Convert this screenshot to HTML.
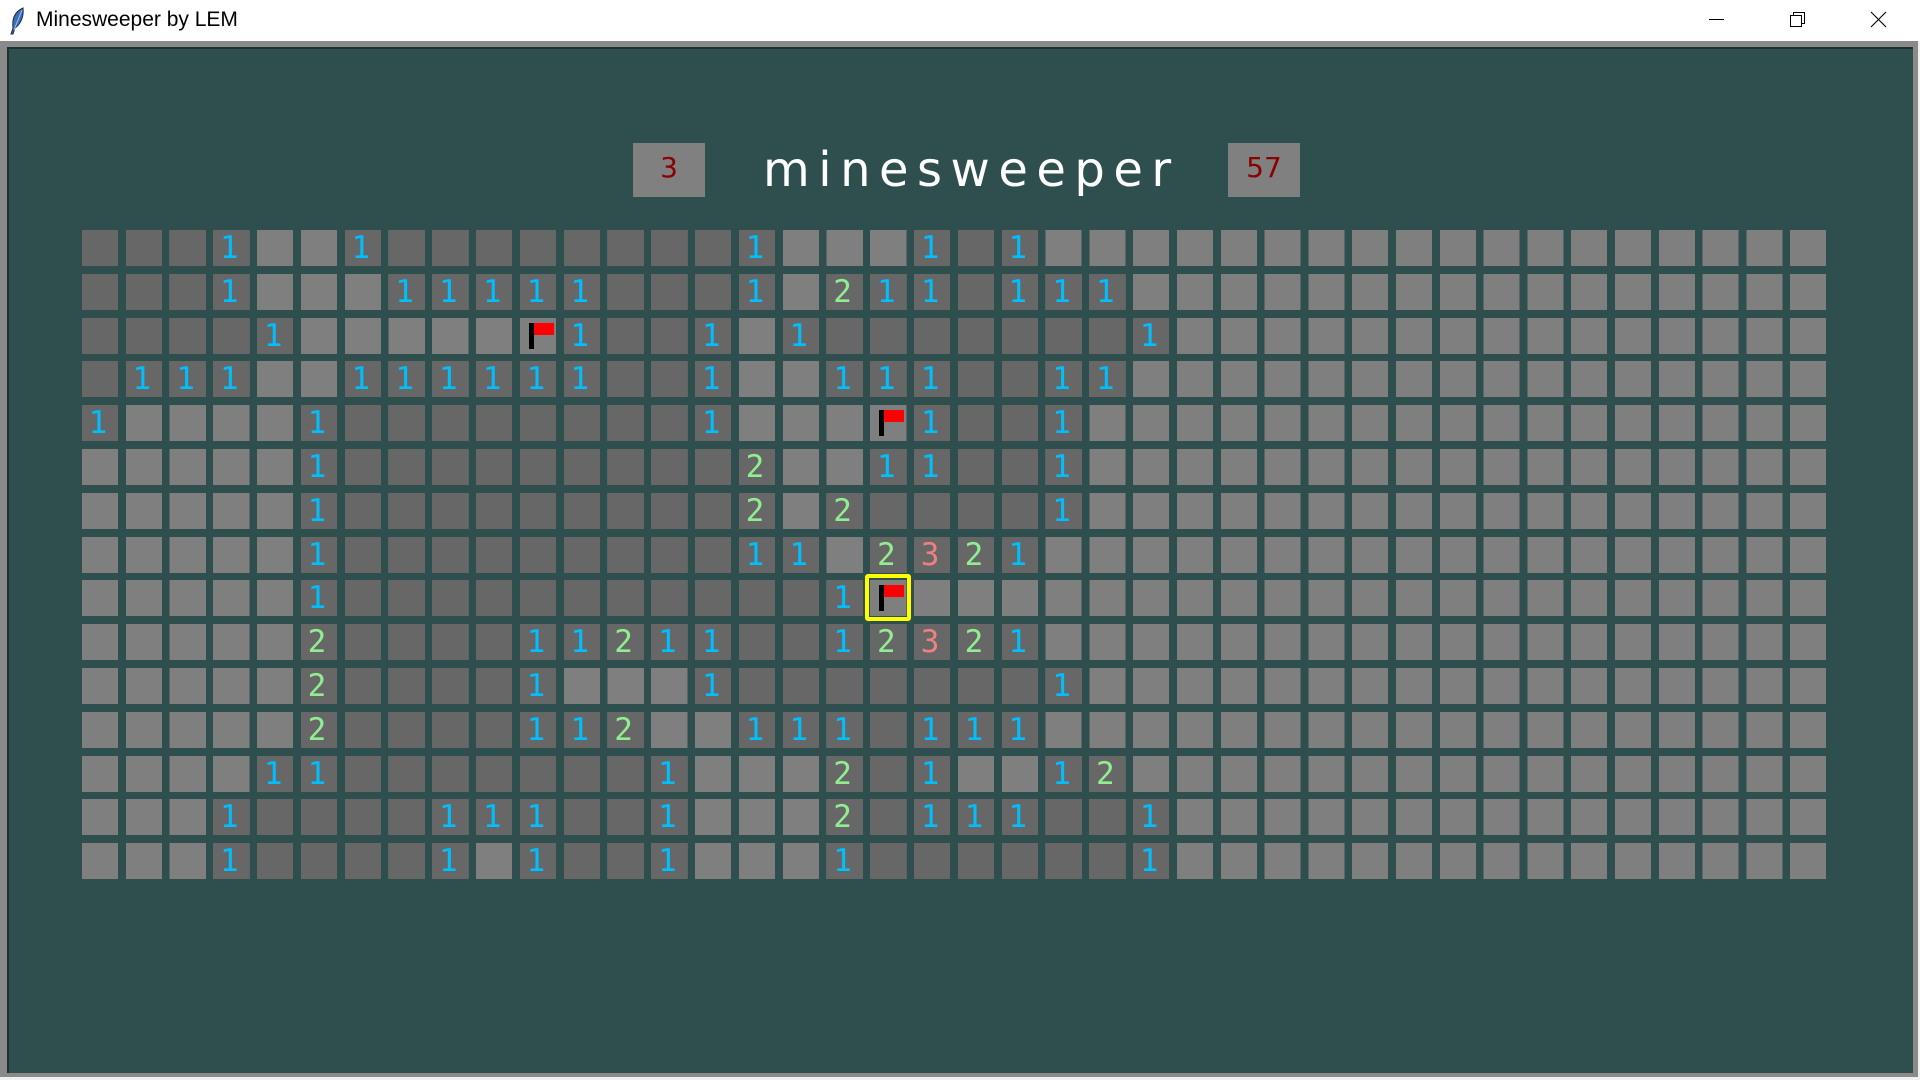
<!DOCTYPE html>
<html><head><meta charset="utf-8"><style>
html,body{margin:0;padding:0;width:1920px;height:1080px;overflow:hidden;background:#f0f0f0;font-family:"Liberation Sans",sans-serif}
#tb{position:absolute;left:0;top:0;width:1920px;height:41px;background:#fff}
#tt{position:absolute;left:36px;top:8px;font-size:21px;color:#000}
#frame{position:absolute;left:0;top:41px;width:1918px;height:1036px;background:#8a8a8a}
#app{position:absolute;left:7px;top:47px;width:1906px;height:1026px;background:#2f4f4f;border-top:2px solid #1d2f2f;border-left:2px solid #1d2f2f;box-sizing:border-box}
.cnt{position:absolute;top:143px;width:72px;height:54px;background:#808080;color:#8b0000;font-family:"DejaVu Sans",sans-serif;font-size:28px;line-height:50px;text-align:center}
#title{position:absolute;left:763px;top:140px;font-family:"DejaVu Sans",sans-serif;font-size:48px;letter-spacing:8.5px;color:#fff;line-height:60px}
#g{position:absolute;left:82px;top:230px;width:1744px}
.row{display:flex;column-gap:7.8px;height:36px;margin-bottom:7.8px;background:repeating-linear-gradient(90deg,#7f7f7f 0 36px,transparent 36px 43.8px)}
.row b,.row i{display:block;flex:none;width:36px;height:36px;position:relative;font-family:"DejaVu Sans Mono",monospace;font-weight:normal;font-style:normal;font-size:31px;line-height:37px;text-align:center;text-indent:-4px}
.row b{background:#676767}
.row i{background:#7f7f7f}
.a{color:#00bfff}.g{color:#90ee90}.r{color:#f08080}
.row i.f::before{content:"";position:absolute;left:9px;top:5px;width:5px;height:26px;background:#000}
.row i.f::after{content:"";position:absolute;left:14px;top:5px;width:20px;height:12px;background:#f00}
#hl{position:absolute;width:46px;height:47px;border:4px solid #ffff00;border-radius:3px;box-sizing:border-box;left:-5px;top:-6px}
</style></head><body>
<div id="tb">
<svg style="position:absolute;left:8px;top:6px" width="18" height="30" viewBox="0 0 18 30"><path d="M15 2 C6 6 4 14 5 22 L3 28 L5 28 L7 22 C13 18 16 10 15 2Z" fill="#3a6fb5" stroke="#1b2d4a" stroke-width="1"/><path d="M14 4 L6 24" stroke="#9cc2ee" stroke-width="1"/></svg>
<div id="tt">Minesweeper by LEM</div>
<svg style="position:absolute;left:1700px;top:0" width="220" height="40" viewBox="1700 0 220 40">
<line x1="1709" y1="19.5" x2="1724" y2="19.5" stroke="#000" stroke-width="1"/>
<rect x="1790.5" y="15.5" width="11" height="11" fill="none" stroke="#000"/>
<path d="M1793.5 15.5 V12.5 H1804.5 V23.5 H1801.5" fill="none" stroke="#000"/>
<path d="M1871 12 L1886 27 M1886 12 L1871 27" stroke="#000" stroke-width="1.1"/>
</svg>
</div>
<div id="frame"></div>
<div id="app"></div>
<div class="cnt" style="left:633px">3</div>
<div id="title">minesweeper</div>
<div class="cnt" style="left:1228px">57</div>
<div id="g">
<div class="row"><b></b><b></b><b></b><b class=a>1</b><i></i><i></i><b class=a>1</b><b></b><b></b><b></b><b></b><b></b><b></b><b></b><b></b><b class=a>1</b><i></i><i></i><i></i><b class=a>1</b><b></b><b class=a>1</b></div>
<div class="row"><b></b><b></b><b></b><b class=a>1</b><i></i><i></i><i></i><b class=a>1</b><b class=a>1</b><b class=a>1</b><b class=a>1</b><b class=a>1</b><b></b><b></b><b></b><b class=a>1</b><i></i><b class=g>2</b><b class=a>1</b><b class=a>1</b><b></b><b class=a>1</b><b class=a>1</b><b class=a>1</b></div>
<div class="row"><b></b><b></b><b></b><b></b><b class=a>1</b><i></i><i></i><i></i><i></i><i></i><i class=f></i><b class=a>1</b><b></b><b></b><b class=a>1</b><i></i><b class=a>1</b><b></b><b></b><b></b><b></b><b></b><b></b><b></b><b class=a>1</b></div>
<div class="row"><b></b><b class=a>1</b><b class=a>1</b><b class=a>1</b><i></i><i></i><b class=a>1</b><b class=a>1</b><b class=a>1</b><b class=a>1</b><b class=a>1</b><b class=a>1</b><b></b><b></b><b class=a>1</b><i></i><i></i><b class=a>1</b><b class=a>1</b><b class=a>1</b><b></b><b></b><b class=a>1</b><b class=a>1</b></div>
<div class="row"><b class=a>1</b><i></i><i></i><i></i><i></i><b class=a>1</b><b></b><b></b><b></b><b></b><b></b><b></b><b></b><b></b><b class=a>1</b><i></i><i></i><i></i><i class=f></i><b class=a>1</b><b></b><b></b><b class=a>1</b></div>
<div class="row"><i></i><i></i><i></i><i></i><i></i><b class=a>1</b><b></b><b></b><b></b><b></b><b></b><b></b><b></b><b></b><b></b><b class=g>2</b><i></i><i></i><b class=a>1</b><b class=a>1</b><b></b><b></b><b class=a>1</b></div>
<div class="row"><i></i><i></i><i></i><i></i><i></i><b class=a>1</b><b></b><b></b><b></b><b></b><b></b><b></b><b></b><b></b><b></b><b class=g>2</b><i></i><b class=g>2</b><b></b><b></b><b></b><b></b><b class=a>1</b></div>
<div class="row"><i></i><i></i><i></i><i></i><i></i><b class=a>1</b><b></b><b></b><b></b><b></b><b></b><b></b><b></b><b></b><b></b><b class=a>1</b><b class=a>1</b><i></i><b class=g>2</b><b class=r>3</b><b class=g>2</b><b class=a>1</b></div>
<div class="row"><i></i><i></i><i></i><i></i><i></i><b class=a>1</b><b></b><b></b><b></b><b></b><b></b><b></b><b></b><b></b><b></b><b></b><b></b><b class=a>1</b><i class=f><span id="hl"></span></i></div>
<div class="row"><i></i><i></i><i></i><i></i><i></i><b class=g>2</b><b></b><b></b><b></b><b></b><b class=a>1</b><b class=a>1</b><b class=g>2</b><b class=a>1</b><b class=a>1</b><b></b><b></b><b class=a>1</b><b class=g>2</b><b class=r>3</b><b class=g>2</b><b class=a>1</b></div>
<div class="row"><i></i><i></i><i></i><i></i><i></i><b class=g>2</b><b></b><b></b><b></b><b></b><b class=a>1</b><i></i><i></i><i></i><b class=a>1</b><b></b><b></b><b></b><b></b><b></b><b></b><b></b><b class=a>1</b></div>
<div class="row"><i></i><i></i><i></i><i></i><i></i><b class=g>2</b><b></b><b></b><b></b><b></b><b class=a>1</b><b class=a>1</b><b class=g>2</b><i></i><i></i><b class=a>1</b><b class=a>1</b><b class=a>1</b><b></b><b class=a>1</b><b class=a>1</b><b class=a>1</b></div>
<div class="row"><i></i><i></i><i></i><i></i><b class=a>1</b><b class=a>1</b><b></b><b></b><b></b><b></b><b></b><b></b><b></b><b class=a>1</b><i></i><i></i><i></i><b class=g>2</b><b></b><b class=a>1</b><i></i><i></i><b class=a>1</b><b class=g>2</b></div>
<div class="row"><i></i><i></i><i></i><b class=a>1</b><b></b><b></b><b></b><b></b><b class=a>1</b><b class=a>1</b><b class=a>1</b><b></b><b></b><b class=a>1</b><i></i><i></i><i></i><b class=g>2</b><b></b><b class=a>1</b><b class=a>1</b><b class=a>1</b><b></b><b></b><b class=a>1</b></div>
<div class="row"><i></i><i></i><i></i><b class=a>1</b><b></b><b></b><b></b><b></b><b class=a>1</b><i></i><b class=a>1</b><b></b><b></b><b class=a>1</b><i></i><i></i><i></i><b class=a>1</b><b></b><b></b><b></b><b></b><b></b><b></b><b class=a>1</b></div>
</div>
</body></html>
